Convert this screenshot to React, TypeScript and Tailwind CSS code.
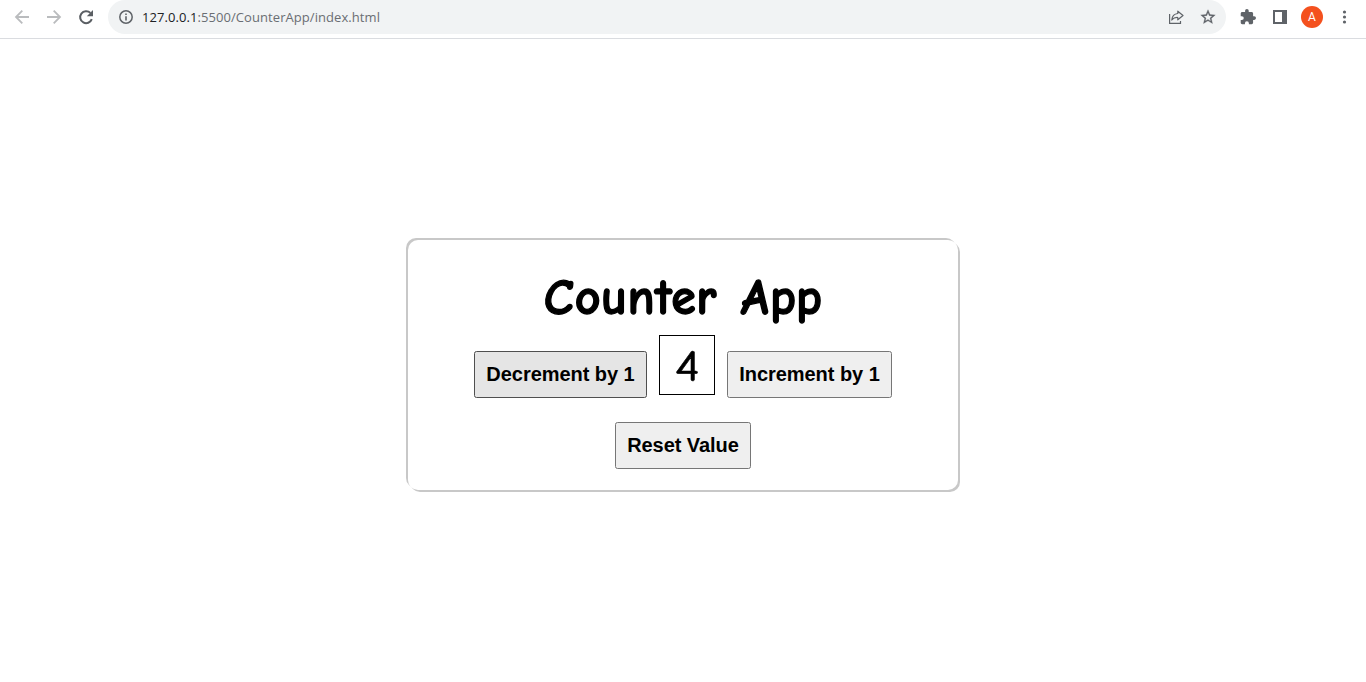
import { useState } from "react";

function BrowserBar() {
  return (
    <header className="flex h-[39px] items-start border-b border-[#dadce0] bg-white">
      <div className="flex h-[34px] w-[108px] shrink-0 items-center gap-4 pl-3.5">
        <svg className="h-4 w-4" viewBox="0 0 16 16" fill="none" stroke="#babcbe" strokeWidth="1.8">
          <path d="M15 8H2.2M8.3 1.7 2 8l6.3 6.3" />
        </svg>
        <svg className="h-4 w-4" viewBox="0 0 16 16" fill="none" stroke="#babcbe" strokeWidth="1.8">
          <path d="M1 8h12.8M7.7 1.7 14 8l-6.3 6.3" />
        </svg>
        <svg className="h-4 w-4" viewBox="0 0 16 16">
          <path d="M13.8 10.2A6 6 0 1 1 12.4 3.9" fill="none" stroke="#5a5e63" strokeWidth="2" />
          <path d="M15 1v6.2H8.8z" fill="#5a5e63" />
        </svg>
      </div>
      <div className="flex h-[34px] w-[1118px] shrink-0 items-center rounded-r-full rounded-l-full bg-[#f1f3f4] pr-2.5 pl-2.5">
        <svg className="h-4 w-4" viewBox="0 0 16 16">
          <circle cx="8" cy="8" r="6.2" fill="none" stroke="#5f6368" strokeWidth="1.5" />
          <path d="M7.2 7.2h1.6v4.3H7.2zM7.2 4.4h1.6V6H7.2z" fill="#5f6368" />
        </svg>
        <span className="ml-2 flex-1 font-['Open_Sans','Noto_Sans',sans-serif] text-[13px] leading-[18px] tracking-[0.07px] whitespace-nowrap text-[#6a6e73]">
          <span className="text-[#202124]">127.0.0.1</span>:5500/CounterApp/index.html
        </span>
        <div className="flex items-center gap-4">
          <svg className="h-4 w-4" viewBox="0 0 16 16" fill="none" stroke="#5f6368" strokeWidth="1.2">
            <path d="M1.6 5v9.4h10.9V12" />
            <path d="M9.8 2.2 15 6.5l-5.2 4.3V8.5C7.2 8.3 5.400 9 3.800 11c.3-3.800 2.300-6.200 6-6.500z" strokeLinejoin="round" />
          </svg>
          <svg className="h-4 w-4" viewBox="1 1 22 22" fill="#5f6368">
            <path d="m22 9.240-7.190-.62L12 2 9.190 8.630 2 9.240l5.460 4.730L5.820 21 12 17.270 18.180 21l-1.630-7.030zM12 15.400l-3.760 2.270 1-4.280-3.320-2.880 4.380-.38L12 6.100l1.710 4.040 4.380.38-3.320 2.880 1 4.280z" stroke="#5f6368" strokeWidth=".4" />
          </svg>
        </div>
      </div>
      <div className="flex h-[34px] flex-1 items-center pl-3.5">
        <svg className="h-4 w-4" viewBox="1 1 22 22" fill="#5f6368">
          <path d="M20.500 11H19V7c0-1.100-.9-2-2-2h-4V3.500a2.500 2.500 0 0 0-5 0V5H4c-1.100 0-2 .9-2 2v3.800h1.500a2.700 2.700 0 0 1 0 5.400H2V20c0 1.100.9 2 2 2h3.800v-1.500a2.700 2.700 0 0 1 5.400 0V22H17c1.100 0 2-.9 2-2v-4h1.500a2.500 2.500 0 0 0 0-5z" />
        </svg>
        <svg className="ml-4 h-4 w-4" viewBox="0 0 16 16" fill="#5f6368">
          <path fillRule="evenodd" d="M1 1h14v14H1zM3 3v10h7V3z" />
        </svg>
        <span className="ml-[13px] flex h-[22px] w-[22px] items-center justify-center rounded-full bg-[#f4511e] font-[Roboto,sans-serif] text-xs text-white">
          A
        </span>
        <svg className="ml-[14px] h-4 w-4" viewBox="0 0 16 16" fill="#5f6368">
          <circle cx="7.500" cy="3" r="1.600" />
          <circle cx="7.500" cy="8" r="1.600" />
          <circle cx="7.500" cy="13" r="1.600" />
        </svg>
      </div>
    </header>
  );
}

const button =
  "h-[47px] shrink-0 rounded-[2.5px] border pb-0.5 font-['Liberation_Sans',Arial,sans-serif] text-xl font-bold tracking-[-0.05px] whitespace-nowrap text-black";

export default function App() {
  const [count, setCount] = useState(4);
  return (
    <div className="flex h-[682px] w-[1366px] flex-col overflow-hidden bg-white">
      <BrowserBar />
      <main className="flex flex-1 flex-col items-center pt-[201px]">
        <section className="flex h-[250px] w-[550px] flex-col items-center rounded-[10px] bg-white pt-[22px] shadow-[2px_2px_0_#c8c8c8,-2px_-2px_0_#c8c8c8]">
          <h1 className="flex h-[73px] w-[278px] justify-between font-['Comic_Sans_MS','Comic_Neue','Open_Sans',sans-serif] text-[50px] leading-[72px] font-bold text-black [-webkit-text-stroke:1.3px_black]">
            <span className="tracking-[0.6px]">
              <span className="inline-block -skew-x-6">C</span>ounter
            </span>{" "}
            <span>
              <span className="inline-block -skew-x-6">A</span>pp
            </span>
          </h1>
          <div className="flex items-start gap-3">
            <button
              className={`${button} mt-4 w-[173px] border-[#4f4f4f] bg-[#e5e5e5]`}
              onClick={() => setCount(count - 1)}
            >
              Decrement by 1
            </button>
            <output className="flex h-[60px] w-14 items-center justify-center border border-black pt-1 pl-px font-['Comic_Sans_MS','Comic_Neue','Open_Sans',sans-serif] text-[44px] leading-none text-black [-webkit-text-stroke:0.5px_black]">
              <span className="scale-x-120">{count}</span>
            </output>
            <button
              className={`${button} mt-4 w-[165px] border-[#767676] bg-[#efefef]`}
              onClick={() => setCount(count + 1)}
            >
              Increment by 1
            </button>
          </div>
          <button
            className={`${button} mt-6 w-[136px] border-[#767676] bg-[#efefef]`}
            onClick={() => setCount(0)}
          >
            Reset Value
          </button>
        </section>
      </main>
    </div>
  );
}
